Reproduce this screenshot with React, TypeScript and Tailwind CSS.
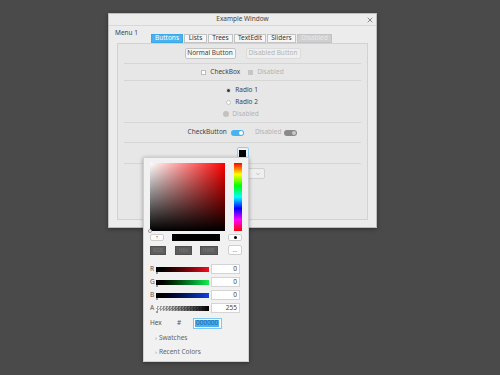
import { ChevronDown, X } from 'lucide-react';

const tabs = [
  { label: 'Buttons', w: 'w-[32px]', active: true },
  { label: 'Lists', w: 'w-[23px]' },
  { label: 'Trees', w: 'w-[25px]' },
  { label: 'TextEdit', w: 'w-[32px]' },
  { label: 'Sliders', w: 'w-[29px]' },
  { label: 'Disabled', w: 'w-[35px]', disabled: true },
];

function Separator() {
  return <div className="mx-[6px] h-px self-stretch bg-[#d6d6d6]" />;
}

function SliderRow({ label, bar }: { label: string; bar: React.ReactNode }) {
  return (
    <div className="flex h-[10px] items-center">
      <span className="w-[6px] text-[6.5px] leading-none text-[#555]">{label}</span>
      <div className="relative w-[53px]">
        {bar}
        <div className="absolute -bottom-[2px] left-0 h-[2px] w-[2px] bg-[#999]" />
      </div>
      <div className="ml-[2px] flex h-[10px] w-[29px] items-center justify-end border border-[#d4d4d4] bg-white pr-[2px] text-[6.5px] leading-none text-[#444]">
        {label === 'A' ? '255' : '0'}
      </div>
    </div>
  );
}

function ColorPopup() {
  return (
    <div className="absolute left-[143px] top-[157px] flex h-[205px] w-[106px] flex-col border border-[#cfcfcf] bg-[#f1f1f1] px-[6px] pt-[5px] shadow-[0_1px_4px_rgba(0,0,0,0.35)]">
      {/* picker */}
      <div className="flex gap-[9px]">
        <div className="relative h-[68px] w-[77px] bg-[linear-gradient(to_top,#000,transparent),linear-gradient(to_right,#fff,#f00)]">
          <div className="absolute -bottom-[2px] -left-[2px] h-[4px] w-[4px] rounded-full border border-[#999] bg-white" />
        </div>
        <div className="h-[68px] w-[8px] bg-[linear-gradient(to_bottom,#f00,#ff0,#0f0,#0ff,#00f,#f0f,#f00)]" />
      </div>

      {/* preview row */}
      <div className="mt-[3px] flex items-center justify-between">
        <div className="flex h-[7px] w-[14px] items-center justify-center rounded-[2px] border border-[#cfcfcf] bg-white text-[5px] leading-none text-[#333]">
          ↑
        </div>
        <div className="h-[7px] w-[48px] bg-black" />
        <div className="flex h-[7px] w-[14px] items-center justify-center rounded-[2px] border border-[#cfcfcf] bg-white">
          <div className="h-[3px] w-[3px] rounded-full bg-black" />
        </div>
      </div>

      {/* mode buttons */}
      <div className="mt-[4px] flex h-[10px] items-center">
        <div className="flex h-[9px] w-[17px] items-center justify-center border border-[#505050] bg-[#5e5e5e] text-[5px] leading-none text-[#7a7a7a]">RGB</div>
        <div className="ml-[9px] flex h-[9px] w-[17px] items-center justify-center border border-[#505050] bg-[#5e5e5e] text-[5px] leading-none text-[#7a7a7a]">HSV</div>
        <div className="ml-[8px] flex h-[9px] w-[19px] items-center justify-center border border-[#505050] bg-[#5e5e5e] text-[5px] leading-none text-[#7a7a7a]">HWB</div>
        <div className="ml-[10px] flex h-[10px] w-[15px] items-center justify-center rounded-[2px] border border-[#cfcfcf] bg-white text-[6px] leading-none text-[#555]">...</div>
      </div>

      {/* sliders */}
      <div className="mt-[9px] flex flex-col gap-[3px]">
        <SliderRow label="R" bar={<div className="h-[5px] w-full bg-linear-to-r from-black to-[#f01020]" />} />
        <SliderRow label="G" bar={<div className="h-[5px] w-full bg-linear-to-r from-black to-[#10f050]" />} />
        <SliderRow label="B" bar={<div className="h-[5px] w-full bg-linear-to-r from-black to-[#1040e0]" />} />
        <SliderRow
          label="A"
          bar={
            <div className="h-[5px] w-full bg-[repeating-conic-gradient(#aaa_0%_25%,#fff_0%_50%)] bg-[length:3px_3px]">
              <div className="h-full w-full bg-linear-to-r from-transparent to-black" />
            </div>
          }
        />
      </div>

      {/* hex */}
      <div className="mt-[5px] flex h-[11px] items-center text-[6.5px] leading-none text-[#555]">
        <span className="w-[27px]">Hex</span>
        <span className="w-[16px]">#</span>
        <div className="flex h-[11px] w-[29px] items-center border border-[#7cc8f2] bg-white px-[1px]">
          <span className="bg-[#4ab3ef] px-[1px] text-[#1c5fa0]">000000</span>
        </div>
      </div>

      <div className="mt-[2px] flex items-center pl-[5px] text-[6.5px] leading-[14px] text-[#666]">
        <span className="mr-[2px] text-[6px] text-[#888]">›</span>Swatches
      </div>
      <div className="flex items-center pl-[5px] text-[6.5px] leading-[14px] text-[#666]">
        <span className="mr-[2px] text-[6px] text-[#888]">›</span>Recent Colors
      </div>
    </div>
  );
}

export default function App() {
  return (
    <div className="relative h-[375px] w-[500px] overflow-hidden bg-[#4a4a4a] font-['Noto_Sans',sans-serif] whitespace-nowrap">
      {/* Window */}
      <div className="absolute left-[108px] top-[13px] flex h-[215px] w-[269px] flex-col border border-[#bdbdbd] bg-[#ececec] shadow-[0_1px_4px_rgba(0,0,0,0.4)]">
        <div className="relative flex h-[12px] items-center justify-center border-b border-[#d8d8d8] text-[6.5px] leading-none text-[#444]">
          Example Window
          <X className="absolute right-[2px] top-[2px] h-[8px] w-[8px] text-[#555]" strokeWidth={2} />
        </div>

        <div className="flex flex-1 flex-col px-[8px] pb-[7px]">
          <div className="flex items-start">
            <span className="-ml-[2px] mt-[4px] w-[36px] text-[6.5px] leading-none text-[#444]">Menu 1</span>
            <div className="mt-[8px] flex gap-px">
              {tabs.map((t) => (
                <div
                  key={t.label}
                  className={`flex h-[9px] items-center justify-center border text-[6.5px] leading-none ${t.w} ${
                    t.active
                      ? 'border-[#3ea8e6] bg-[#47b2f0] text-white'
                      : t.disabled
                        ? 'border-[#c4c4c4] bg-[#cfcfcf] text-[#e8e8e8]'
                        : 'border-[#c2c2c2] bg-[#f6f6f6] text-[#333]'
                  }`}
                >
                  {t.label}
                </div>
              ))}
            </div>
          </div>

          {/* Tab panel */}
          <div className="flex flex-1 flex-col items-center border border-[#d2d2d2] bg-[#e7e7e7] pt-[4px] text-[6.5px] leading-none text-[#444]">
            <div className="flex gap-[10px]">
              <div className="flex h-[11px] w-[51px] items-center justify-center rounded-[2px] border border-[#c4c4c4] bg-[#f7f7f7]">Normal Button</div>
              <div className="flex h-[11px] w-[55px] items-center justify-center rounded-[2px] border border-[#dcdcdc] bg-[#efefef] text-[#b4b4b4]">Disabled Button</div>
            </div>
            <div className="h-[4px]" />
            <Separator />

            <div className="flex h-[16px] items-center">
              <div className="h-[5px] w-[5px] border border-[#bdbdbd] bg-white" />
              <span className="ml-[4px]">CheckBox</span>
              <div className="ml-[8px] h-[5px] w-[5px] bg-[#c6c6c6]" />
              <span className="ml-[4px] text-[#b4b4b4]">Disabled</span>
            </div>
            <Separator />

            <div className="flex flex-col gap-[4px] pb-[4px] pt-[5px]">
              <div className="flex h-[8px] items-center">
                <div className="flex h-[5px] w-[5px] items-center justify-center rounded-full border border-[#cfcfcf] bg-white">
                  <div className="h-[3px] w-[3px] rounded-full bg-[#333]" />
                </div>
                <span className="ml-[4px]">Radio 1</span>
              </div>
              <div className="flex h-[8px] items-center">
                <div className="h-[5px] w-[5px] rounded-full border border-[#c4c4c4] bg-white" />
                <span className="ml-[4px]">Radio 2</span>
              </div>
              <div className="-ml-[3px] flex h-[8px] items-center">
                <div className="h-[6px] w-[6px] rounded-full bg-[#c2c2c2]" />
                <span className="ml-[3px] text-[#b4b4b4]">Disabled</span>
              </div>
            </div>
            <Separator />

            <div className="flex h-[19px] items-center">
              <span>CheckButton</span>
              <div className="ml-[4px] flex h-[6px] w-[13px] items-center justify-end rounded-full bg-[#47b2f0] pr-[1px]">
                <div className="h-[4px] w-[4px] rounded-full bg-white" />
              </div>
              <span className="ml-[11px] text-[#b4b4b4]">Disabled</span>
              <div className="ml-[3px] flex h-[6px] w-[13px] items-center justify-end rounded-full bg-[#8a8a8a] pr-[1px]">
                <div className="h-[4px] w-[4px] rounded-full bg-[#c8c8c8]" />
              </div>
            </div>
            <Separator />

            <div className="flex h-[20px] items-center">
              <div className="flex h-[12px] w-[12px] items-center justify-center rounded-[2px] border border-[#8fcdf0] bg-[#e9f3f9]">
                <div className="h-[7px] w-[7px] bg-black" />
              </div>
            </div>
            <Separator />

            <div className="mt-[4px] flex h-[11px] w-[44px] items-center justify-end rounded-[2px] border border-[#d0d0d0] bg-[#efefef] pr-[3px]">
              <ChevronDown className="h-[6px] w-[6px] text-[#999]" strokeWidth={2} />
            </div>
          </div>
        </div>
      </div>

      <ColorPopup />
    </div>
  );
}
